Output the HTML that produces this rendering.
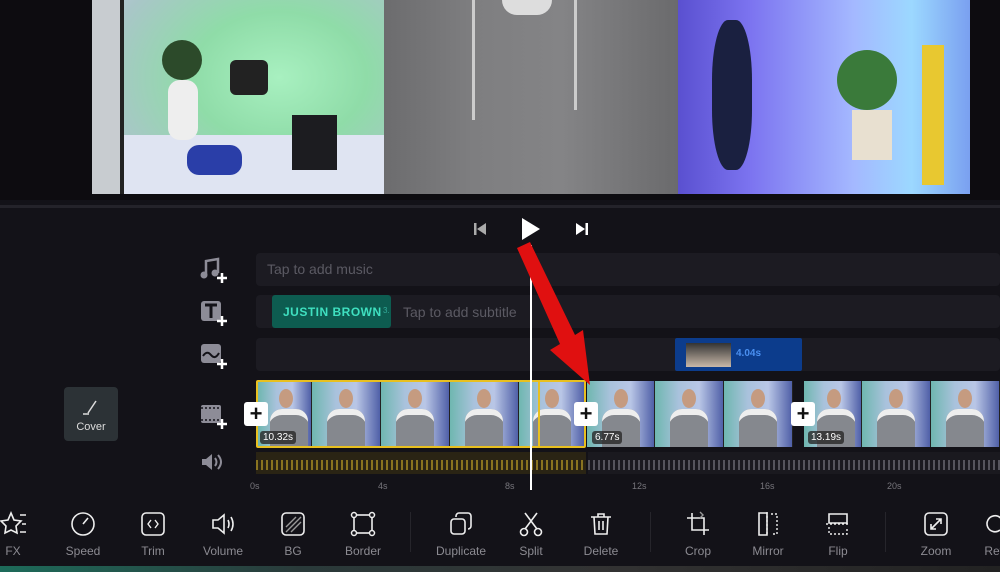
<!DOCTYPE html>
<html><head><style>
*{margin:0;padding:0;box-sizing:border-box}
body{width:1000px;height:572px;background:#131218;overflow:hidden;position:relative;font-family:"Liberation Sans",sans-serif;color:#ccc}
.a{position:absolute}
.track{position:absolute;left:256px;right:0;background:#1c1b22;border-radius:4px}
.thumb{position:absolute;top:381px;height:66px;background:linear-gradient(90deg,#6fb7b0 0%,#a9c2dc 35%,#b9c6e6 65%,#5060a8 100%);overflow:hidden;border-right:1px solid #222}
.thumb:before{content:"";position:absolute;left:40%;top:8px;width:14px;height:19px;border-radius:50%;background:#c59b80}
.thumb:after{content:"";position:absolute;left:22%;top:28px;width:38px;height:42px;border-radius:12px 12px 0 0;background:#85888e;box-shadow:inset 0 8px 0 -2px #eee}
.plus{position:absolute;width:24px;height:24px;background:#fff;border-radius:3px;color:#111;font-size:22px;line-height:23px;text-align:center;font-weight:bold}
.lab{position:absolute;font-size:10px;color:#fff;background:rgba(40,40,40,.8);padding:1px 3px;border-radius:3px}
.tool{position:absolute;top:510px;width:70px;text-align:center;font-size:12px;color:#8c8b92}
.tool svg{display:block;margin:0 auto 6px;width:28px;height:28px}
.rl{position:absolute;top:481px;font-size:9px;color:#77767c}
</style></head><body>
<div class="a" style="left:0;top:0;width:1000px;height:200px;background:#0d0c10"></div>
<!-- video -->
<div class="a" style="left:92px;top:0;width:878px;height:194px;overflow:hidden;background:#888">
 <div class="a" style="left:0;top:0;width:30px;height:194px;background:#c8ccd0"></div>
 <div class="a" style="left:28px;top:0;width:4px;height:194px;background:#222"></div>
 <div class="a" style="left:32px;top:0;width:310px;height:194px;background:radial-gradient(ellipse at 50% 40%,#a8f0c0 0%,#8fdca8 40%,#a9c6c8 80%,#c0c8e0 100%)"></div>
 <div class="a" style="left:32px;top:135px;width:310px;height:59px;background:#dfe4f2"></div>
 <div class="a" style="left:76px;top:80px;width:30px;height:60px;background:#eee;border-radius:12px"></div>
 <div class="a" style="left:70px;top:40px;width:40px;height:40px;background:#2c4a2a;border-radius:50%"></div>
 <div class="a" style="left:138px;top:60px;width:38px;height:35px;background:#222;border-radius:6px"></div>
 <div class="a" style="left:200px;top:115px;width:45px;height:55px;background:#1c1c20"></div>
 <div class="a" style="left:95px;top:145px;width:55px;height:30px;background:#2a3ea8;border-radius:12px"></div>
 <div class="a" style="left:292px;top:0;width:296px;height:194px;background:linear-gradient(90deg,#6c6c6e,#7e7e80 30%,#848486 60%,#6a6a6c)"></div>
 <div class="a" style="left:410px;top:0;width:50px;height:15px;background:#ddd;border-radius:0 0 20px 20px"></div>
 <div class="a" style="left:380px;top:0;width:3px;height:120px;background:#ccc"></div>
 <div class="a" style="left:482px;top:0;width:3px;height:110px;background:#ccc"></div>
 <div class="a" style="left:586px;top:0;width:292px;height:194px;background:linear-gradient(90deg,#5a50d0,#7c74f0 25%,#a4b8ff 60%,#9cd8ff 80%,#7aa0f0)"></div>
 <div class="a" style="left:620px;top:20px;width:40px;height:150px;background:#1a2040;border-radius:40%"></div>
 <div class="a" style="left:830px;top:45px;width:22px;height:140px;background:#e8c830"></div>
 <div class="a" style="left:760px;top:110px;width:40px;height:50px;background:#e8e0d0"></div>
 <div class="a" style="left:745px;top:50px;width:60px;height:60px;background:#3a7a3a;border-radius:50%"></div>
</div>
<div class="a" style="left:0;top:205px;width:1000px;height:3px;background:#24232a"></div>
<!-- controls -->
<svg class="a" style="left:473px;top:222px" width="14" height="14"><rect x="1" y="1" width="2.5" height="12" fill="#aaa"/><path d="M13 1 L4 7 L13 13Z" fill="#aaa"/></svg>
<svg class="a" style="left:520px;top:217px" width="22" height="24"><path d="M2 1 L20 12 L2 23Z" fill="#fff"/></svg>
<svg class="a" style="left:575px;top:222px" width="14" height="14"><path d="M1 1 L10 7 L1 13Z" fill="#fff"/><rect x="10.5" y="1" width="2.5" height="12" fill="#fff"/></svg>
<!-- tracks -->
<div class="track" style="top:253px;height:33px"><span class="a" style="left:11px;top:8px;font-size:14px;color:#5b5a63">Tap to add music</span></div>
<div class="track" style="top:295px;height:33px"><div class="a" style="left:16px;top:0;width:119px;height:33px;background:#0d5c50;border-radius:3px"><span class="a" style="left:11px;top:10px;font-size:12px;font-weight:bold;color:#3fe0c0;letter-spacing:.5px">JUSTIN BROWN</span><span class="a" style="left:111px;top:11px;font-size:8px;color:#3a9">3.</span></div><span class="a" style="left:147px;top:9px;font-size:14px;color:#5b5a63">Tap to add subtitle</span></div>
<div class="track" style="top:338px;height:33px"><div class="a" style="left:419px;top:0;width:127px;height:33px;background:#0c3c8c;border-radius:2px"><div class="a" style="left:11px;top:5px;width:45px;height:24px;background:linear-gradient(#333,#c9b8a8)"></div><span class="a" style="left:61px;top:10px;font-size:10px;color:#4a8ff0;font-weight:bold">4.04s</span></div></div>
<!-- icons left -->
<svg class="a" style="left:200px;top:257px" width="30" height="26"><path d="M6 18V4l12-2v14" fill="none" stroke="#8d8c97" stroke-width="2.5"/><circle cx="4" cy="18" r="3.5" fill="#8d8c97"/><circle cx="15" cy="16" r="3.5" fill="#8d8c97"/><path d="M17 21h10M22 16v10" stroke="#fff" stroke-width="2.5"/></svg>
<svg class="a" style="left:200px;top:300px" width="30" height="26"><rect x="1" y="1" width="20" height="20" rx="3" fill="#8d8c97"/><path d="M5 5h12M11 5v13" stroke="#131218" stroke-width="3"/><path d="M17 21h10M22 16v10" stroke="#fff" stroke-width="2.5"/></svg>
<svg class="a" style="left:200px;top:343px" width="30" height="26"><rect x="1" y="1" width="20" height="19" rx="3" fill="#8d8c97"/><path d="M3 13q4-6 8-1t8-2" fill="none" stroke="#131218" stroke-width="2"/><path d="M17 21h10M22 16v10" stroke="#fff" stroke-width="2.5"/></svg>
<svg class="a" style="left:200px;top:403px" width="30" height="26"><rect x="1" y="2" width="20" height="18" rx="2" fill="#8d8c97"/><path d="M1 5h20M1 17h20" stroke="#131218" stroke-width="1.5" stroke-dasharray="2 2"/><path d="M17 21h10M22 16v10" stroke="#fff" stroke-width="2.5"/></svg>
<svg class="a" style="left:201px;top:452px" width="24" height="20"><path d="M1 7h4l6-5v16l-6-5H1Z" fill="#8d8c97"/><path d="M14 6q3 4 0 8M17 3q6 7 0 14" fill="none" stroke="#8d8c97" stroke-width="2"/></svg>
<div class="a" style="left:64px;top:387px;width:54px;height:54px;background:#2c3236;border-radius:4px;font-size:11px;color:#ddd;text-align:center;padding-top:34px">Cover</div>
<svg class="a" style="left:80px;top:397px" width="20" height="20"><path d="M8 16l8-12" stroke="#ddd" stroke-width="1.5"/><path d="M3 17h6" stroke="#ddd" stroke-width="1.5"/></svg>
<!-- thumbs -->
<div class="thumb" style="left:258px;width:54px"></div>
<div class="thumb" style="left:312px;width:69px"></div>
<div class="thumb" style="left:381px;width:69px"></div>
<div class="thumb" style="left:450px;width:69px"></div>
<div class="thumb" style="left:519px;width:66px"></div>
<div class="thumb" style="left:587px;width:68px"></div>
<div class="thumb" style="left:655px;width:69px"></div>
<div class="thumb" style="left:724px;width:69px"></div>
<div class="thumb" style="left:804px;width:58px"></div>
<div class="thumb" style="left:862px;width:69px"></div>
<div class="thumb" style="left:931px;width:69px"></div>
<div class="a" style="left:256px;top:380px;width:330px;height:68px;border:2px solid #e8c020;border-radius:2px"></div>
<div class="a" style="left:538px;top:380px;width:2px;height:68px;background:#e8c020"></div>
<div class="lab" style="left:260px;top:431px">10.32s</div>
<div class="lab" style="left:592px;top:431px">6.77s</div>
<div class="lab" style="left:808px;top:431px">13.19s</div>
<div class="plus" style="left:244px;top:402px">+</div>
<div class="plus" style="left:574px;top:402px">+</div>
<div class="plus" style="left:791px;top:402px">+</div>
<!-- audio -->
<div class="a" style="left:256px;top:452px;width:330px;height:22px;background:#2a2414;background-image:repeating-linear-gradient(90deg,#8a7420 0 2px,transparent 2px 5px);background-size:100% 10px;background-repeat:no-repeat;background-position:0 8px"></div>
<div class="a" style="left:588px;top:452px;width:412px;height:22px;background:#1a191f;background-image:repeating-linear-gradient(90deg,#55545c 0 2px,transparent 2px 5px);background-size:100% 10px;background-repeat:no-repeat;background-position:0 8px"></div>
<!-- ruler -->
<span class="rl" style="left:250px">0s</span><span class="rl" style="left:378px">4s</span><span class="rl" style="left:505px">8s</span><span class="rl" style="left:632px">12s</span><span class="rl" style="left:760px">16s</span><span class="rl" style="left:887px">20s</span>
<!-- playhead -->
<div class="a" style="left:530px;top:245px;width:2px;height:245px;background:#fff"></div>
<!-- red arrow -->
<svg class="a" style="left:505px;top:240px" width="95" height="160"><path d="M12 8 L25 2 L70 95 L78 90 L85 145 L45 110 L55 104 Z" fill="#e01010"/></svg>
<!-- toolbar -->
<div class="a" style="left:410px;top:512px;width:1px;height:40px;background:#26252b"></div>
<div class="a" style="left:650px;top:512px;width:1px;height:40px;background:#26252b"></div>
<div class="a" style="left:885px;top:512px;width:1px;height:40px;background:#26252b"></div>
<div class="tool" style="left:-22px"><svg viewBox="0 0 28 28"><path d="M12 3 L15 10 L22 11 L17 16 L18 23 L12 20 L6 23 L7 16 L2 11 L9 10Z" fill="none" stroke="#eee" stroke-width="1.6"/><path d="M21 5h6M23 14h4M21 22h6" stroke="#eee" stroke-width="1.6"/></svg>FX</div>
<div class="tool" style="left:48px"><svg viewBox="0 0 28 28"><circle cx="14" cy="14" r="11" fill="none" stroke="#eee" stroke-width="1.6"/><path d="M14 14 L19 8" stroke="#eee" stroke-width="1.6"/></svg>Speed</div>
<div class="tool" style="left:118px"><svg viewBox="0 0 28 28"><rect x="3" y="3" width="22" height="22" rx="4" fill="none" stroke="#eee" stroke-width="1.6"/><path d="M12 10l-3 4 3 4M16 10l3 4-3 4" fill="none" stroke="#eee" stroke-width="1.4"/></svg>Trim</div>
<div class="tool" style="left:188px"><svg viewBox="0 0 28 28"><path d="M4 10h5l6-5v18l-6-5H4Z" fill="none" stroke="#eee" stroke-width="1.6"/><path d="M19 10q2 4 0 8M22 7q4 7 0 14" fill="none" stroke="#eee" stroke-width="1.6"/></svg>Volume</div>
<div class="tool" style="left:258px"><svg viewBox="0 0 28 28"><rect x="3" y="3" width="22" height="22" rx="4" fill="none" stroke="#eee" stroke-width="1.6"/><path d="M7 17l10-10M7 22l15-15M12 22l10-10" stroke="#999" stroke-width="1.4"/></svg>BG</div>
<div class="tool" style="left:328px"><svg viewBox="0 0 28 28"><rect x="5" y="5" width="18" height="18" fill="none" stroke="#eee" stroke-width="1.6"/><g fill="#131218" stroke="#eee" stroke-width="1.5"><circle cx="5" cy="5" r="2.5"/><circle cx="23" cy="5" r="2.5"/><circle cx="5" cy="23" r="2.5"/><circle cx="23" cy="23" r="2.5"/></g></svg>Border</div>
<div class="tool" style="left:426px"><svg viewBox="0 0 28 28"><rect x="4" y="9" width="14" height="15" rx="3" fill="none" stroke="#eee" stroke-width="1.6"/><path d="M9 7V6a3 3 0 013-3h9a3 3 0 013 3v10a3 3 0 01-3 3" fill="none" stroke="#eee" stroke-width="1.6"/></svg>Duplicate</div>
<div class="tool" style="left:496px"><svg viewBox="0 0 28 28"><path d="M8 3l12 16M20 3L8 19" stroke="#eee" stroke-width="1.6"/><circle cx="7" cy="22" r="3.5" fill="none" stroke="#eee" stroke-width="1.6"/><circle cx="21" cy="22" r="3.5" fill="none" stroke="#eee" stroke-width="1.6"/></svg>Split</div>
<div class="tool" style="left:566px"><svg viewBox="0 0 28 28"><path d="M4 7h20M11 7V4h6v3M7 7l1 17h12l1-17M12 11v9M16 11v9" fill="none" stroke="#eee" stroke-width="1.6"/></svg>Delete</div>
<div class="tool" style="left:663px"><svg viewBox="0 0 28 28"><path d="M8 3v17h17M3 8h17v17" fill="none" stroke="#eee" stroke-width="1.6"/><path d="M16 2l3 3-3 3" fill="none" stroke="#999" stroke-width="1.4"/></svg>Crop</div>
<div class="tool" style="left:733px"><svg viewBox="0 0 28 28"><path d="M13 3H5v22h8Z" fill="none" stroke="#eee" stroke-width="1.6"/><path d="M13 2v24M17 4h6v20h-6" fill="none" stroke="#eee" stroke-width="1.4" stroke-dasharray="2 2"/></svg>Mirror</div>
<div class="tool" style="left:803px"><svg viewBox="0 0 28 28"><path d="M5 13V4h18v9Z" fill="none" stroke="#eee" stroke-width="1.6"/><path d="M2 14h24M5 17v7h18v-7" fill="none" stroke="#eee" stroke-width="1.4" stroke-dasharray="2 2"/></svg>Flip</div>
<div class="tool" style="left:901px"><svg viewBox="0 0 28 28"><rect x="3" y="3" width="22" height="22" rx="4" fill="none" stroke="#eee" stroke-width="1.6"/><path d="M9 19l10-10M14 9h5v5M9 14v5h5" fill="none" stroke="#eee" stroke-width="1.6"/></svg>Zoom</div>
<div class="tool" style="left:960px"><svg viewBox="0 0 28 28"><path d="M22 14a8 8 0 10-3 6" fill="none" stroke="#eee" stroke-width="1.6"/></svg>Rev</div>
<div class="a" style="left:0;top:566px;width:1000px;height:6px;background:linear-gradient(90deg,#1d6b5a,#2a3a3a 30%,#333 60%,#222)"></div>
</body></html>
